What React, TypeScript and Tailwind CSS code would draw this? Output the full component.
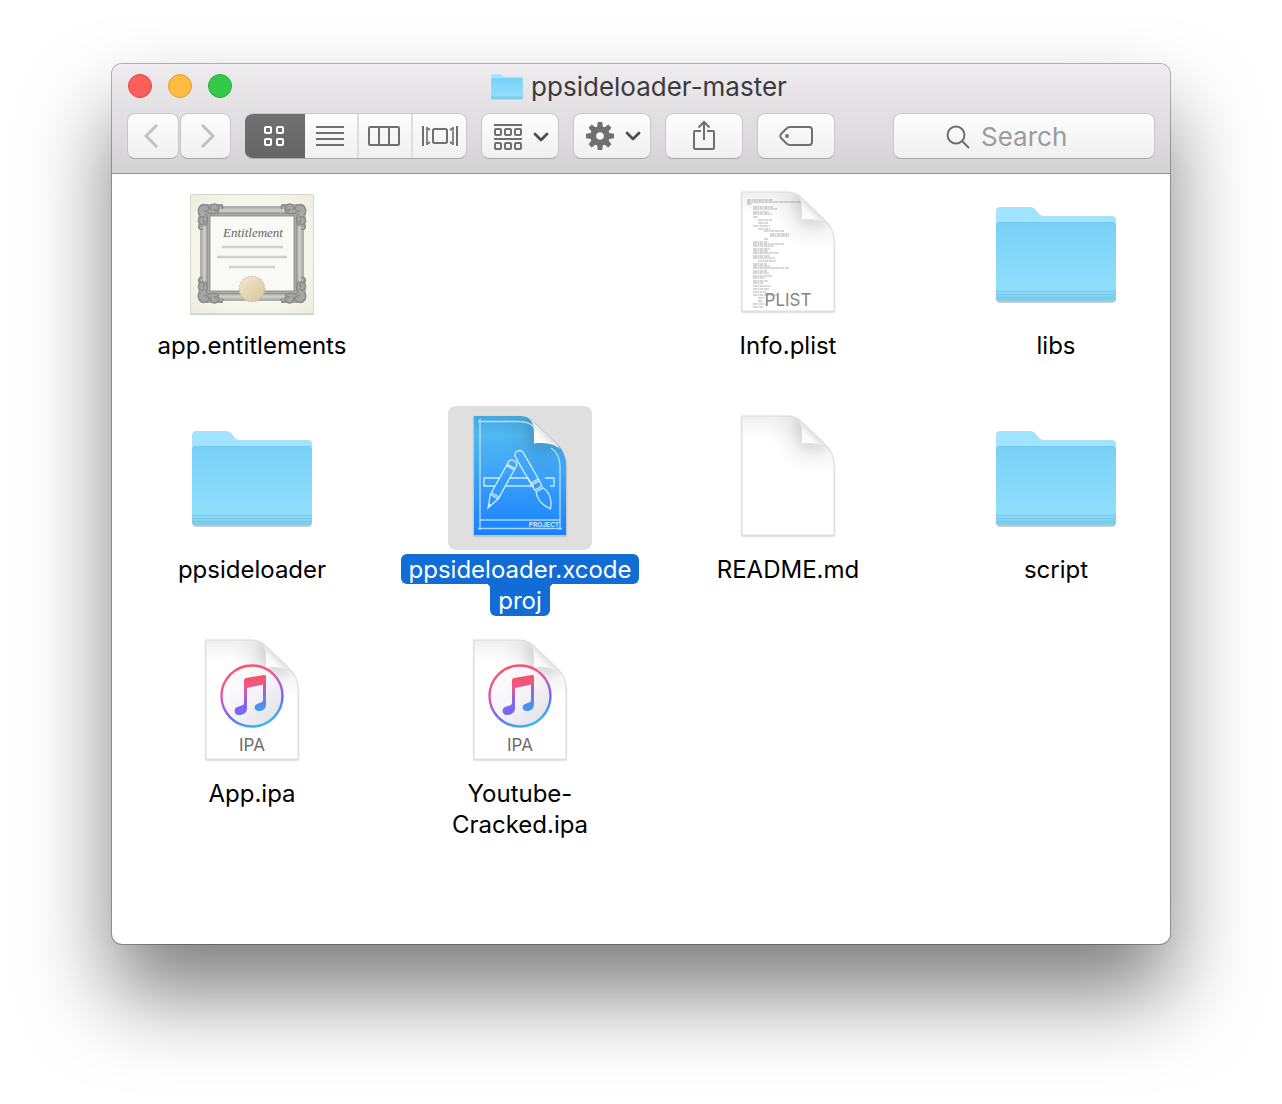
import { useId, useState, type ReactNode } from "react";

function FolderArt({ className }: { className: string }) {
  const id = useId();
  return (
    <svg viewBox="11 24 122 99" className={className} aria-hidden="true">
      <defs>
        <linearGradient id={id} x1="0" y1="0" x2="0" y2="1">
          <stop offset="0" stopColor="#78d0f8" />
          <stop offset="0.82" stopColor="#90dffc" />
          <stop offset="1" stopColor="#7acbec" />
        </linearGradient>
      </defs>
      <path d="M12 42V116Q12 121 16 121H128Q132 121 132 116V42Z" fill="#000" opacity="0.18" />
      <path
        d="M12 116V29Q12 25 16 25H46Q49 25 51 27L55 32Q57 34 60 34H128Q132 34 132 38V116Z"
        fill="#a2e3ff"
      />
      <path d="M12 44Q12 40 16 40H128Q132 40 132 44V116Q132 119.500 128 119.500H16Q12 119.500 12 116Z" fill={`url(#${id})`} />
      <path d="M14 40.500H130" stroke="#6cc3ea" strokeWidth="1" opacity="0.5" />
      <path d="M12 109.500H132M12 112.500H132M12 115.500H132" stroke="#67b8da" strokeWidth="1" opacity="0.4" />
    </svg>
  );
}

const PAGE = "M26 10H70C78 10 82 12 87 17L109 38C115 44 118 51 118 60V129H26Z";

function PageArt({ children, blue = false }: { children?: ReactNode; blue?: boolean }) {
  const id = useId();
  return (
    <svg viewBox="0 0 144 144" className="size-36" aria-hidden="true">
      <defs>
        <linearGradient id={`${id}b`} x1="0" y1="0" x2="0" y2="1">
          <stop offset="0" stopColor="#46a8dc" />
          <stop offset="0.16" stopColor="#50b8f3" />
          <stop offset="0.5" stopColor="#3ba2f8" />
          <stop offset="1" stopColor="#1882fc" />
        </linearGradient>
        <linearGradient id={`${id}t`} x1="0" y1="0" x2="0" y2="1">
          <stop offset="0" stopColor="#000" stopOpacity="0.06" />
          <stop offset="1" stopColor="#000" stopOpacity="0" />
        </linearGradient>
        <radialGradient id={`${id}r`} gradientUnits="userSpaceOnUse" cx="98" cy="26" r="44">
          <stop offset="0" stopColor="#000" stopOpacity="0.16" />
          <stop offset="0.35" stopColor="#000" stopOpacity="0.12" />
          <stop offset="0.6" stopColor="#000" stopOpacity="0.04" />
          <stop offset="1" stopColor="#000" stopOpacity="0" />
        </radialGradient>
        <linearGradient id={`${id}f`} gradientUnits="userSpaceOnUse" x1="86" y1="38" x2="97" y2="27">
          <stop offset="0" stopColor="#ffffff" />
          <stop offset="0.6" stopColor="#fafafa" />
          <stop offset="1" stopColor="#e2e2e2" />
        </linearGradient>
      </defs>
      <path d={PAGE} fill="none" stroke="#000" strokeOpacity="0.05" strokeWidth="3" transform="translate(0 1)" />
      <path d={PAGE} fill="none" stroke="#000" strokeOpacity="0.1" strokeWidth="1" transform="translate(0 1)" />
      <path d={PAGE} fill={blue ? `url(#${id}b)` : "#fff"} />
      {!blue && <path d="M26 10H70C78 10 82 12 87 17V32H26Z" fill={`url(#${id}t)`} />}
      <path d={PAGE} fill={`url(#${id}r)`} />
      {!blue && <path d={PAGE} fill="none" stroke="#dcdcdc" strokeWidth="1" />}
      {children}
      <path d="M80 12C84 14 86 20 86 28V37.500C96 36 106 38 112 43L109 38L87 17C84 14 82 12 80 12Z" fill={`url(#${id}f)`} />
    </svg>
  );
}

const PLIST_LINES = [
  [32, 18, 26], [32, 20, 54], [32, 22, 5], [38, 25, 20], [38, 27, 24], [38, 30, 16], [38, 32, 19],
  [38, 35, 5], [43, 38, 14], [43, 41, 10], [38, 44, 16], [43, 47, 12], [49, 49, 20], [55, 52, 19],
  [55, 54, 19], [49, 57, 4], [38, 60, 14], [38, 62, 31], [38, 64, 21], [38, 67, 17], [38, 69, 15],
  [38, 71, 26], [38, 74, 17], [38, 76, 22], [43, 79, 18], [38, 82, 14], [38, 84, 17], [38, 86, 36],
  [38, 89, 14], [38, 91, 16], [38, 94, 19], [38, 96, 12], [38, 99, 15], [38, 101, 11], [38, 104, 18],
  [38, 107, 16], [38, 110, 13], [38, 113, 25], [43, 116, 6], [43, 119, 5], [38, 122, 12], [38, 125, 10],
];

function PlistArt() {
  return (
    <PageArt>
      {PLIST_LINES.map(([x, y, w]) => (
        <path key={y} d={`M${x - 1} ${y}h${w}`} stroke="#777" strokeWidth="1" strokeDasharray="4 .5 2 .5 3 .7" opacity="0.6" />
      ))}
      <text x="72" y="124" textAnchor="middle" fontSize="17" fill="#858585" fontFamily="Inter, sans-serif">
        PLIST
      </text>
    </PageArt>
  );
}

function MusicArt() {
  const id = useId();
  return (
    <PageArt>
      <defs>
        <linearGradient id={`${id}c`} x1="0.3" y1="0" x2="0.7" y2="1">
          <stop offset="0" stopColor="#fb5260" />
          <stop offset="0.25" stopColor="#f0588c" />
          <stop offset="0.5" stopColor="#b05ae0" />
          <stop offset="0.72" stopColor="#5a74f4" />
          <stop offset="1" stopColor="#30c0f8" />
        </linearGradient>
        <linearGradient id={`${id}n`} gradientUnits="userSpaceOnUse" x1="72" y1="44" x2="76" y2="86">
          <stop offset="0" stopColor="#fb5258" />
          <stop offset="0.3" stopColor="#e9588c" />
          <stop offset="0.65" stopColor="#8a60f0" />
          <stop offset="1" stopColor="#6a6cff" />
        </linearGradient>
        <linearGradient id={`${id}m`} gradientUnits="userSpaceOnUse" x1="80" y1="46" x2="80" y2="82">
          <stop offset="0" stopColor="#fb5258" />
          <stop offset="0.45" stopColor="#9068d8" />
          <stop offset="1" stopColor="#349ff8" />
        </linearGradient>
        <linearGradient id={`${id}w`} x1="0" y1="0" x2="1" y2="1">
          <stop offset="0" stopColor="#fff" />
          <stop offset="0.5" stopColor="#f6f4f8" />
          <stop offset="1" stopColor="#dedde6" />
        </linearGradient>
      </defs>
      <circle cx="72" cy="66" r="30.500" fill={`url(#${id}w)`} stroke={`url(#${id}c)`} strokeWidth="2.400" />
      <path d="M83 49L86 46V74C86 79 83 81 79 81C75 81 74 78 75 76C77 72 83 74 83 70Z" fill={`url(#${id}m)`} />
      <path
        d="M64 50Q64 48.500 66 48L84 45Q86 44.700 86 47V54L67 58V78C67 83 63 85 59 85C55 85 54 81 55 79C57 75 64 77 64 73Z"
        fill={`url(#${id}n)`}
      />
      <text x="72" y="121" textAnchor="middle" fontSize="17" fill="#6e6e6e" fontFamily="Inter, sans-serif">
        IPA
      </text>
    </PageArt>
  );
}

function ProjectArt() {
  return (
    <PageArt blue>
      <g fill="none" stroke="#cdeaff" strokeWidth="1.300">
        <path d="M32 13V124M30 15.500H68C78 15.500 82 17 86 21M103 42C109 46 112 52 112 60V124M32 114H112M30 122.500H114" strokeWidth="1.400" opacity="0.8" />
        <path d="M51 72H36V80H47M62 72H80L85 80H58M97 72H106V80H102" />
        <g transform="translate(40 102) rotate(29)">
          <path d="M0 0L-4.500 -13H4.500ZM-4.500 -13V-46H4.500V-13M-4.500 -15H4.500M-4.500 -46V-50Q-4.500 -54 0 -54Q4.500 -54 4.500 -50V-46M-4.500 -47.500H4.500" />
          <path d="M-1.200 -3.500H1.200" strokeWidth="2" />
        </g>
        <g transform="translate(102 102) rotate(-30)">
          <path d="M-4.500 -31V-61Q-4.500 -65.500 0 -65.500Q4.500 -65.500 4.500 -61V-31ZM-4.500 -31L-4 -23H4L4.500 -31M-4.500 -29H4.500M-4 -21H4M-4 -21C-7 -14 -5 -6 0 1C5 -4 8 -13 4 -21Z" />
        </g>
      </g>
      <text x="111" y="121" textAnchor="end" fontSize="6.500" fill="#d6efff" fontFamily="Inter, sans-serif" fontWeight="600">
        PROJECT
      </text>
    </PageArt>
  );
}

function CertificateArt() {
  const id = useId();
  const seal = Array.from({ length: 48 }, (_, i) => {
    const r = i % 2 ? 12.2 : 13.4;
    const a = (i * Math.PI) / 24;
    return `${72 + r * Math.cos(a)},${107 + r * Math.sin(a)}`;
  }).join(" ");
  return (
    <svg viewBox="0 0 144 144" className="size-36" aria-hidden="true">
      <defs>
        <radialGradient id={`${id}p`} r="0.72">
          <stop offset="0.6" stopColor="#f8f7ef" />
          <stop offset="1" stopColor="#edebdd" />
        </radialGradient>
        <linearGradient id={`${id}s`} x1="0" y1="0" x2="1" y2="1">
          <stop offset="0" stopColor="#f3ead0" />
          <stop offset="1" stopColor="#d3c39a" />
        </linearGradient>
        <g id={`${id}o`} fill="none" stroke="#8a8a88" strokeWidth="1.500">
          <path d="M19 48L18 30Q18 22 27 22H43L38 31H29L27 41Z" fill="#a6a6a3" stroke="none" />
          <path d="M20 33C16 28 20 21 26 23C31 25 28 31 24 29M31 28C28 23 35 20 38 24C40 28 36 30 34 27M38 24C41 21 44 24 42 27M25 36C19 32 17 39 20 42C23 44 26 41 23 38M20 42C17 45 20 49 23 47M27 31C34 32 37 32 39 29M26 32C28 37 28 41 25 44" />
        </g>
      </defs>
      <rect x="10" y="13" width="124" height="120" rx="1" fill="#000" opacity="0.18" />
      <rect x="10.500" y="12.500" width="123" height="119" rx="1" fill={`url(#${id}p)`} stroke="#d9d7c9" />
      <rect x="25" y="29" width="94" height="85" fill="#f7f7f4" stroke="#bcbcb8" strokeWidth="10" />
      <rect x="21" y="25" width="102" height="93" fill="none" stroke="#a0a09d" strokeWidth="1" />
      <rect x="24.500" y="28.500" width="95" height="86" fill="none" stroke="#cfcfca" strokeWidth="2" />
      <rect x="28.500" y="32.500" width="87" height="78" fill="#f9f9f6" stroke="#9a9a98" strokeWidth="4" />
      <rect x="28.500" y="32.500" width="87" height="78" fill="none" stroke="#b6b6b3" strokeWidth="1" strokeDasharray="1 1" />
      <use href={`#${id}o`} />
      <use href={`#${id}o`} transform="translate(144 0) scale(-1 1)" />
      <use href={`#${id}o`} transform="translate(0 143) scale(1 -1)" />
      <use href={`#${id}o`} transform="translate(144 143) scale(-1 -1)" />
      <text x="73" y="55" textAnchor="middle" fontSize="13" fontStyle="italic" fill="#666" fontFamily="Liberation Serif, serif">
        Entitlement
      </text>
      <path d="M42 65H103M37 75H107M49 85H95" stroke="#d0d0cc" strokeWidth="2.600" />
      <polygon points={seal} fill={`url(#${id}s)`} stroke="#c4b78f" strokeWidth="0.500" />
    </svg>
  );
}

function FolderIcon() {
  return (
    <span className="flex size-36 justify-center pt-6">
      <FolderArt className="h-[99px] w-[122px]" />
    </span>
  );
}

type Entry = { lines: string[]; icon: ReactNode; cell?: string };

const FILES: Entry[] = [
  { lines: ["app.entitlements"], icon: <CertificateArt /> },
  { lines: ["Info.plist"], icon: <PlistArt />, cell: "col-start-3" },
  { lines: ["libs"], icon: <FolderIcon /> },
  { lines: ["ppsideloader"], icon: <FolderIcon /> },
  { lines: ["ppsideloader.xcode", "proj"], icon: <ProjectArt /> },
  { lines: ["README.md"], icon: <PageArt /> },
  { lines: ["script"], icon: <FolderIcon /> },
  { lines: ["App.ipa"], icon: <MusicArt /> },
  { lines: ["Youtube-", "Cracked.ipa"], icon: <MusicArt /> },
];

function FileItem({ entry, selected, onSelect }: { entry: Entry; selected: boolean; onSelect: () => void }) {
  return (
    <li className={`flex justify-center ${entry.cell ?? ""}`}>
      <button type="button" aria-pressed={selected} onClick={onSelect} className="flex h-[212px] flex-col items-center outline-none">
        <span className={`mb-1 block size-36 rounded-lg ${selected ? "bg-[#dfdfdf]" : ""}`}>{entry.icon}</span>
        {entry.lines.map((line, i) => (
          <span
            key={line}
            className={`relative block px-2 pt-px text-2xl whitespace-nowrap ${i === 0 ? "h-[30px] leading-[30px]" : "h-8 leading-8"} ${
              selected
                ? i === 0
                  ? "rounded-md bg-[#116cd6] text-white"
                  : "rounded-b-md bg-[#116cd6] text-white before:absolute before:top-0 before:right-full before:size-1 before:bg-[radial-gradient(circle_at_0_100%,transparent_4px,#116cd6_4px)] after:absolute after:top-0 after:left-full after:size-1 after:bg-[radial-gradient(circle_at_100%_100%,transparent_4px,#116cd6_4px)]"
                : "text-black"
            }`}
          >
            {line}
          </span>
        ))}
      </button>
    </li>
  );
}

function Chevron() {
  return (
    <svg viewBox="0 0 16 10" className="h-[10px] w-4" fill="none" stroke="#4d4d4d" strokeWidth="2.800" strokeLinecap="round" strokeLinejoin="round">
      <path d="M2 2L8 8L14 2" />
    </svg>
  );
}

const VIEWS: { name: string; art: ReactNode }[] = [
  {
    name: "Icon view",
    art: (
      <svg viewBox="0 0 20 20" className="size-5" fill="none" stroke="currentColor" strokeWidth="2">
        <rect x="1" y="1" width="6" height="6" rx="1" />
        <rect x="13" y="1" width="6" height="6" rx="1" />
        <rect x="1" y="13" width="6" height="6" rx="1" />
        <rect x="13" y="13" width="6" height="6" rx="1" />
      </svg>
    ),
  },
  {
    name: "List view",
    art: (
      <svg viewBox="0 0 28 20" className="h-5 w-7" stroke="currentColor" strokeWidth="2">
        <path d="M0 1H28M0 7H28M0 13H28M0 19H28" />
      </svg>
    ),
  },
  {
    name: "Column view",
    art: (
      <svg viewBox="0 0 32 20" className="h-5 w-8" fill="none" stroke="currentColor" strokeWidth="2">
        <rect x="1" y="1" width="30" height="18" rx="1" />
        <path d="M11 1V19M21 1V19" />
      </svg>
    ),
  },
  {
    name: "Cover flow view",
    art: (
      <svg viewBox="0 0 36 20" className="h-5 w-9" fill="none" stroke="currentColor" strokeWidth="2">
        <path d="M1 0V20M35 0V20" />
        <path d="M5 1V19M31 1V19" strokeWidth="1.600" />
        <path d="M5 2L8 4M5 18L8 16M31 2L28 4M31 18L28 16" strokeWidth="1.600" />
        <rect x="11" y="3" width="14" height="14" rx="1.500" />
      </svg>
    ),
  },
];

const SURFACE = "bg-linear-to-b from-[#fdfdfd] to-[#f0f0f0] border border-[#c8c6c9] border-b-[#a9a8aa]";

function ToolButton({ label, width, children }: { label: string; width: string; children: ReactNode }) {
  return (
    <button type="button" aria-label={label} className={`flex h-[46px] shrink-0 items-center justify-center rounded-lg text-[#6f6f6f] ${SURFACE} ${width}`}>
      {children}
    </button>
  );
}

function Toolbar() {
  const [view, setView] = useState(0);
  return (
    <div className="flex gap-[14px] px-[15px] pb-[14px]">
      <div className="flex gap-px">
        <ToolButton label="Back" width="w-[52px]">
          <svg viewBox="0 0 14 24" className="mr-1 h-6 w-[14px]" fill="none" stroke="#c1c1c1" strokeWidth="3">
            <path d="M13 1L2 12L13 23" />
          </svg>
        </ToolButton>
        <ToolButton label="Forward" width="w-[51px]">
          <svg viewBox="0 0 14 24" className="ml-1 h-6 w-[14px]" fill="none" stroke="#c1c1c1" strokeWidth="3">
            <path d="M1 1L12 12L1 23" />
          </svg>
        </ToolButton>
      </div>
      <div role="group" aria-label="View" className={`flex h-[46px] overflow-hidden rounded-lg ${SURFACE} ${view === 0 ? "border-l-0" : ""}`}>
        {VIEWS.map((v, i) => (
          <button
            key={v.name}
            type="button"
            aria-label={v.name}
            aria-pressed={view === i}
            onClick={() => setView(i)}
            className={`flex items-center justify-center ${i === 0 ? "w-[60px] pr-[2px]" : i === 3 ? "w-[53px]" : "w-[54px] border-r-2 border-[#dedede] pr-[2px]"} ${
              view === i ? "-my-px bg-linear-to-b from-[#717171] to-[#656565] text-white" : "text-[#6f6f6f]"
            }`}
          >
            {v.art}
          </button>
        ))}
      </div>
      <ToolButton label="Arrange" width="w-[78px] gap-[11px] pl-[2px] pt-[2px]">
        <svg viewBox="0 0 28 26" className="h-[26px] w-7" fill="none" stroke="currentColor" strokeWidth="2">
          <path d="M0 1H28M0 15H28" />
          <rect x="1" y="5" width="6" height="6" rx="1" />
          <rect x="11" y="5" width="6" height="6" rx="1" />
          <rect x="21" y="5" width="6" height="6" rx="1" />
          <rect x="1" y="19" width="6" height="6" rx="1" />
          <rect x="11" y="19" width="6" height="6" rx="1" />
          <rect x="21" y="19" width="6" height="6" rx="1" />
        </svg>
        <Chevron />
      </ToolButton>
      <ToolButton label="Action" width="w-[78px] gap-[11px] pl-[2px]">
        <svg viewBox="-14 -14 28 28" className="size-7" stroke="currentColor" fill="none">
          <circle r="6.800" strokeWidth="6" />
          {[0, 45, 90, 135, 180, 225, 270, 315].map((a) => (
            <path key={a} d="M-3 -8.500L-2.200 -14H2.200L3 -8.500Z" fill="currentColor" stroke="none" transform={`rotate(${a})`} />
          ))}
        </svg>
        <Chevron />
      </ToolButton>
      <ToolButton label="Share" width="w-[78px] pb-[2px]">
        <svg viewBox="0 0 24 30" className="h-[30px] w-6" fill="none" stroke="currentColor" strokeWidth="2">
          <path d="M9 11H3Q2 11 2 12V28Q2 29 3 29H21Q22 29 22 28V12Q22 11 21 11H15" />
          <path d="M12 20V2M6.500 7.500L12 2L17.500 7.500" />
        </svg>
      </ToolButton>
      <ToolButton label="Tags" width="w-[78px]">
        <svg viewBox="0 0 34 20" className="h-5 w-[34px]" fill="none" stroke="currentColor" strokeWidth="2">
          <path d="M11 1H30Q33 1 33 4V16Q33 19 30 19H11Q9 19 7.500 17.500L2 12Q0.500 10 2 8L7.500 2.500Q9 1 11 1Z" />
          <circle cx="8" cy="10" r="1.900" fill="currentColor" stroke="none" />
        </svg>
      </ToolButton>
      <label className={`ml-auto flex h-[46px] w-[262px] min-w-0 items-center gap-[11px] rounded-lg pt-[2px] pl-[52px] ${SURFACE}`}>
        <svg viewBox="0 0 24 24" className="size-6 shrink-0" fill="none" stroke="#6f6f6f" strokeWidth="2">
          <circle cx="10" cy="10" r="8.500" />
          <path d="M16 16L23 23" />
        </svg>
        <input
          type="search"
          aria-label="Search"
          placeholder="Search"
          className="min-w-0 flex-1 bg-transparent text-[26px] leading-8 text-[#333] outline-none placeholder:text-[#9c9c9c]"
        />
      </label>
    </div>
  );
}

const LIGHTS = [
  { name: "Close", look: "bg-[#fc605b] border-[#e04440]" },
  { name: "Minimize", look: "bg-[#fdbc40] border-[#de9f34]" },
  { name: "Zoom", look: "bg-[#34c84a] border-[#2aac3a]" },
];

export default function App() {
  const [selected, setSelected] = useState(4);
  return (
    <div className="min-h-screen bg-white px-28 pt-16 pb-40 font-[Inter,sans-serif]">
      <main className="overflow-hidden rounded-[10px] bg-white shadow-[0_0_0_1px_rgba(0,0,0,0.28),0_50px_85px_rgba(0,0,0,0.5)]">
        <header className="border-b border-[#949294] bg-linear-to-b from-[#eeecef] to-[#d4d2d5]">
          <div className="mb-[5px] grid h-11 grid-cols-[1fr_auto_1fr] items-center px-4">
            <div className="flex gap-4">
              {LIGHTS.map((l) => (
                <button key={l.name} type="button" aria-label={l.name} className={`size-6 rounded-full border ${l.look}`} />
              ))}
            </div>
            <h1 className="flex items-center gap-2 pt-[2px] pr-1 text-[26px] leading-8 text-[#3d3a3e]">
              <FolderArt className="h-[26px] w-8" />
              ppsideloader-master
            </h1>
          </div>
          <Toolbar />
        </header>
        <ul className="grid grid-cols-4 gap-x-12 gap-y-3 pt-2 pr-1 pb-[102px] pl-[30px]">
          {FILES.map((f, i) => (
            <FileItem key={f.lines.join("")} entry={f} selected={selected === i} onSelect={() => setSelected(i)} />
          ))}
        </ul>
      </main>
    </div>
  );
}
